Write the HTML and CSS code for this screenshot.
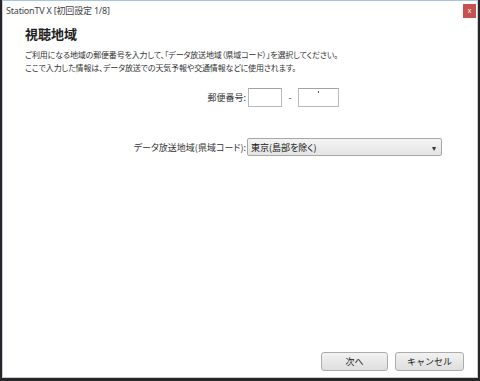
FILE: index.html
```html
<!DOCTYPE html>
<html>
<head>
    <title>StationTV X</title>
    <link rel="stylesheet" href="styles.css">
</head>
<body>
    <div class="window">
        <div class="titlebar">
            <span class="title">StationTV X [初回設定 1/8]</span>
            <button class="close">x</button>
        </div>

        <div class="content">
            <h1>視聴地域</h1>
            <p class="desc">
                ご利用になる地域の郵便番号を入力して、「データ放送地域（県域コード）」を選択してください。<br>
                ここで入力した情報は、データ放送での天気予報や交通情報などに使用されます。
            </p>

            <div class="form">
                <label class="lbl">郵便番号:</label>
                <div class="zip">
                    <span class="box short"></span>
                    <span class="dash">-</span>
                    <span class="box long"><i class="caret"></i></span>
                </div>

                <label class="lbl lbl-area">データ放送地域(県域コード):</label>
                <div class="select">
                    <span>東京(島部を除く)</span>
                    <span class="arrow">&#9662;</span>
                </div>
            </div>
        </div>

        <div class="footer">
            <button class="btn">次へ</button>
            <button class="btn">キャンセル</button>
        </div>
    </div>
</body>
</html>
```

FILE: styles.css
```css
body {
    margin: 0;
    background-color: #262626;
    font-family: "Noto Sans CJK JP", "Noto Sans", sans-serif;
    color: #222;
}
.window {
    width: 474px;
    height: 376px;
    margin-left: 2px;
    background-color: #fff;
    border: 1px solid #c9ced6;
    border-top-color: #a9c4e0;
    display: flex;
    flex-direction: column;
}
.titlebar {
    height: 18px;
    display: flex;
    align-items: center;
    padding-left: 3px;
}
.title {
    font-family: "Noto Sans", "Noto Sans CJK JP", sans-serif;
    font-size: 9px;
    color: #444;
    letter-spacing: -0.2px;
}
.close {
    margin-left: auto;
    margin-right: 1px;
    margin-top: 1px;
    width: 13px;
    height: 14px;
    padding: 0;
    border: none;
    background-color: #c75050;
    color: #fff;
    font-family: "Liberation Sans", sans-serif;
    font-size: 7px;
    line-height: 12px;
}
.content {
    padding-left: 22px;
}
h1 {
    margin: 7px 0 0;
    font-size: 13px;
    line-height: 16px;
    font-weight: bold;
    color: #222;
}
.desc {
    margin: 6px 0 0;
    font-size: 8px;
    line-height: 13px;
    letter-spacing: -0.15px;
    font-feature-settings: "palt";
    color: #333;
}
.form {
    margin-top: 14px;
    display: grid;
    grid-template-columns: 221px auto;
    column-gap: 1px;
    row-gap: 31px;
    align-items: center;
}
.lbl {
    justify-self: end;
    font-size: 9px;
    color: #333;
    font-feature-settings: "palt";
}
.zip {
    display: flex;
    align-items: center;
}
.box {
    height: 17px;
    border: 1px solid #b5b9c0;
    border-top-color: #a0a4aa;
    background-color: #fff;
    position: relative;
}
.short {
    width: 32px;
    margin-left: 1px;
}
.long {
    width: 39px;
}
.caret {
    position: absolute;
    left: 19px;
    top: 2px;
    width: 1px;
    height: 2px;
    background-color: #555;
}
.dash {
    width: 16px;
    text-align: center;
    font-size: 9px;
    color: #444;
}
.select {
    width: 188px;
    height: 16px;
    border: 1px solid #a8a8a8;
    border-radius: 2px;
    background: linear-gradient(#f4f4f4, #e4e4e4);
    display: flex;
    align-items: center;
    padding: 0 2px 0 3px;
    font-size: 9px;
    color: #111;
    font-feature-settings: "palt";
}
.arrow {
    margin-left: auto;
    font-size: 8px;
    color: #333;
    padding-right: 3px;
}
.footer {
    margin-top: auto;
    display: flex;
    justify-content: flex-end;
    gap: 7px;
    padding: 0 13px 6px 0;
}
.btn {
    width: 67px;
    height: 19px;
    padding: 0;
    border: 1px solid #acacac;
    border-radius: 3px;
    background: linear-gradient(#f2f2f2, #dedede);
    font-family: "Noto Sans CJK JP", sans-serif;
    font-size: 9px;
    color: #222;
}
.btn + .btn {
    width: 69px;
}
```
